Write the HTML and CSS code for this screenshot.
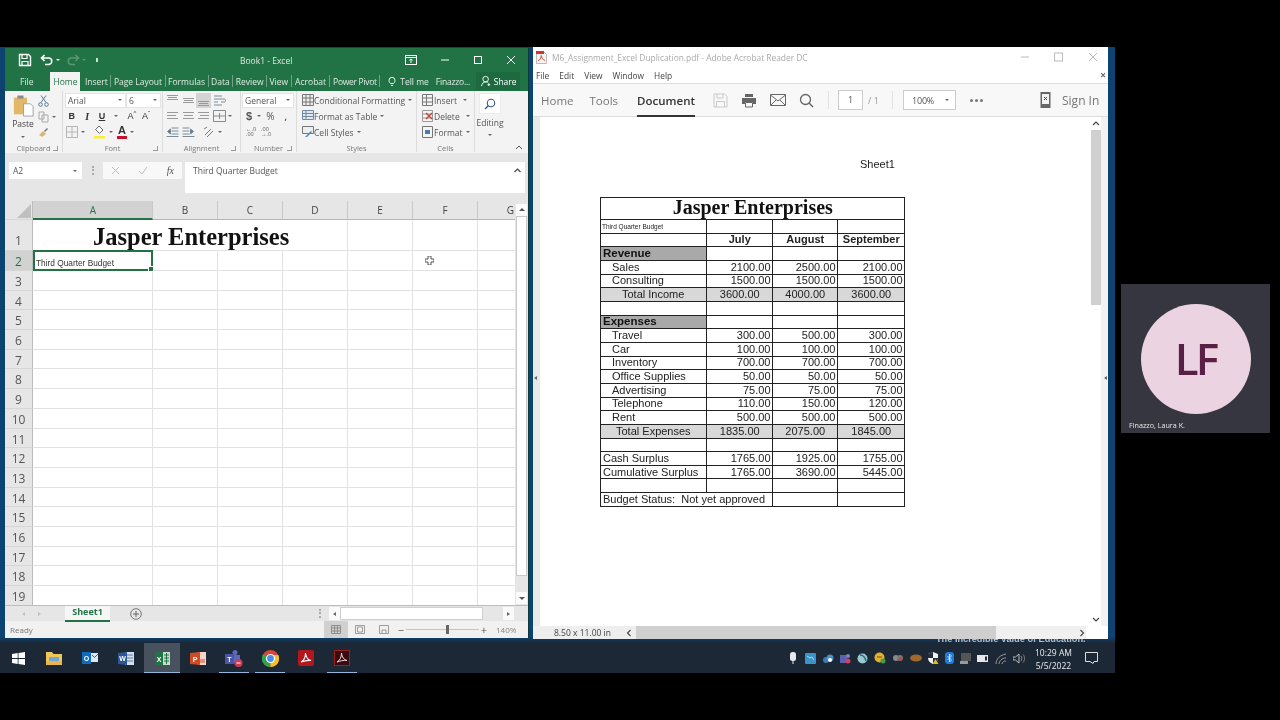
FILE: index.html
```html
<!DOCTYPE html>
<html lang="en">
<head>
<meta charset="utf-8">
<title>Excel and Acrobat</title>
<link rel="stylesheet" href="styles.css">
</head>
<body>
<div class="stage">
  <div class="screen">
    <div class="wallpaper-text">The Incredible Value of Education.</div>

    <section class="excel">
      <div class="x-title">
        <div class="qat">
          <svg width="14" height="14" viewBox="0 0 14 14"><path d="M1.5 1.5h9l2 2v9h-11z" fill="none" stroke="#fff" stroke-width="1.4"/><path d="M4 2v3.5h5V2M4 12.5V8.500h6v4" fill="none" stroke="#fff" stroke-width="1.2"/></svg>
          <svg class="undo" width="14" height="12" viewBox="0 0 14 12"><path d="M2 4h6.500a3.200 3.200 0 0 1 0 6.500H5M4.500 1L1.500 4l3 3" fill="none" stroke="#fff" stroke-width="1.600"/></svg>
          <span class="tiny-caret w"></span>
          <svg class="dim redo" width="14" height="12" viewBox="0 0 14 12"><path d="M12 4H5.500a3.200 3.200 0 0 0 0 6.500H9M9.500 1l3 3-3 3" fill="none" stroke="#fff" stroke-width="1.600"/></svg>
          <span class="tiny-caret dim w"></span>
          <span class="qat-more"></span>
        </div>
        <div class="x-name">Book1 - Excel</div>
        <div class="win-btns">
          <svg width="12" height="10" viewBox="0 0 12 10"><rect x=".5" y=".5" width="11" height="9" fill="none" stroke="#fff"/><path d="M.5 2.500h11M6 8V4M4.300 5.500 6 3.800l1.700 1.700" fill="none" stroke="#fff"/></svg>
          <svg width="10" height="10" viewBox="0 0 10 10"><path d="M1 5h8" stroke="#fff"/></svg>
          <svg width="10" height="10" viewBox="0 0 10 10"><rect x="1.500" y="1.500" width="7" height="7" fill="none" stroke="#fff"/></svg>
          <svg width="10" height="10" viewBox="0 0 10 10"><path d="M1 1l8 8M9 1L1 9" stroke="#fff"/></svg>
        </div>
      </div>
      <nav class="x-tabs">
        <span class="tab file">File</span>
        <span class="tab home">Home</span>
        <span class="tab">Insert</span><i></i>
        <span class="tab">Page Layout</span><i></i>
        <span class="tab">Formulas</span><i></i>
        <span class="tab">Data</span><i></i>
        <span class="tab">Review</span><i></i>
        <span class="tab">View</span><i></i>
        <span class="tab t-next">Acrobat</span><i></i>
        <span class="tab t-next t-pp">Power Pivot</span><i></i>
        <span class="tab tell"><svg width="8" height="11" viewBox="0 0 8 11"><path d="M2.500 7.500C1.500 6.500 1 5.700 1 4.300a3 3 0 0 1 6 0c0 1.400-.5 2.200-1.500 3.200zM3 9.500h2" fill="none" stroke="#fff" stroke-width=".9"/></svg>Tell me</span>
        <span class="tab user">Finazzo...</span>
        <span class="share"><svg width="11" height="12" viewBox="0 0 11 12"><circle cx="5" cy="4" r="3" fill="none" stroke="#fff"/><path d="M.5 11.500C1 8.500 3 7 5 7s2.500.5 3 1M8.500 8.500v3M7 10h3" fill="none" stroke="#fff"/></svg>Share</span>
      </nav>

      <div class="ribbon">
        <div class="grp g-clip">
          <div class="grp-body clip-body">
            <div class="paste">
              <svg width="21" height="24" viewBox="0 0 24 27"><path d="M1 4h15v19H1z" fill="#e3b768"/><path d="M5 1.500h7V5H5z" fill="#8a8a8a"/><path d="M12 11h8l3 3v11H12z" fill="#fff" stroke="#9a9a9a"/></svg>
              <span>Paste</span><span class="tiny-caret"></span>
            </div>
            <div class="clip-col">
              <svg width="11" height="12" viewBox="0 0 11 12"><path d="M3 .500l5 7M8 .500l-5 7" stroke="#5a7a9a"/><circle cx="2.500" cy="9.500" r="1.800" fill="none" stroke="#5a7a9a"/><circle cx="8.500" cy="9.500" r="1.800" fill="none" stroke="#5a7a9a"/></svg>
              <span class="with-caret"><svg width="11" height="12" viewBox="0 0 11 12"><path d="M1 1h5v7H1zM4 4h6v7H4z" fill="#f4f4f4" stroke="#a9a9a9"/></svg><span class="tiny-caret"></span></span>
              <svg width="11" height="11" viewBox="0 0 11 11"><path d="M1 8l4-4 3 3-4 3z" fill="#d8b878"/><path d="M6 4l3-3 1 1-3 3z" fill="#777"/></svg>
            </div>
          </div>
          <div class="grp-label">Clipboard<b class="launcher"></b></div>
        </div>

        <div class="grp g-font">
          <div class="grp-body rows">
            <div class="rw selects"><span class="sel name">Arial<span class="tiny-caret"></span></span><span class="sel size">6<span class="tiny-caret"></span></span></div>
            <div class="rw font-btns"><b class="fb">B</b><em class="fb">I</em><u class="fb">U</u><span class="tiny-caret"></span><span class="fb ga">A<sup>^</sup></span><span class="fb ga">A<sup>ˇ</sup></span></div>
            <div class="rw fill-btns">
              <svg width="12" height="12" viewBox="0 0 12 12"><path d="M.5.500h11v11H.5zM6 .500v11M.5 6h11" fill="none" stroke="#b5b5b5"/></svg><span class="tiny-caret"></span>
              <svg class="ml" width="13" height="14" viewBox="0 0 13 14"><path d="M6 1l4 4-3.500 3.500-4-4z" fill="#fff" stroke="#666"/><path d="M1 11h11v2.500H1z" fill="#f6ee3a"/></svg><span class="tiny-caret"></span>
              <span class="colour-a">A</span><span class="tiny-caret"></span>
            </div>
          </div>
          <div class="grp-label">Font<b class="launcher"></b></div>
        </div>

        <div class="grp g-align">
          <div class="grp-body rows">
            <div class="rw al"><span class="lines top"></span><span class="lines mid"></span><span class="lines bot on"></span><svg width="13" height="12" viewBox="0 0 13 12"><path d="M1 2h8M1 5h10c2 0 2 3 0 3H8M1 8h4M1 11h8" fill="none" stroke="#7a8a9a"/></svg></div>
            <div class="rw al"><span class="lines ll"></span><span class="lines lc"></span><span class="lines lr"></span><svg width="13" height="12" viewBox="0 0 13 12"><path d="M.5.500h12v11H.5zM.5 6h12M6.500 3v6" fill="none" stroke="#8a8a8a"/></svg><span class="tiny-caret"></span></div>
            <div class="rw al"><svg width="13" height="10" viewBox="0 0 12 10"><path d="M5 1h7M5 4h7M5 7h7M0 9.500h12M4 2L1 4.500 4 7z" stroke="#7a8a9a" fill="#3d78b8"/></svg><svg width="13" height="10" viewBox="0 0 12 10"><path d="M0 1h7M0 4h7M0 7h7M0 9.500h12M8 2l3 2.500L8 7z" stroke="#7a8a9a" fill="#3d78b8"/></svg><svg class="ml" width="12" height="12" viewBox="0 0 12 12"><path d="M2 9l6-6M4 11l6-6M1 3l3-2" stroke="#777" fill="none"/></svg><span class="tiny-caret"></span></div>
          </div>
          <div class="grp-label">Alignment<b class="launcher"></b></div>
        </div>

        <div class="grp g-num">
          <div class="grp-body rows">
            <div class="rw"><span class="sel gen">General<span class="tiny-caret"></span></span></div>
            <div class="rw nums"><span class="dollar">$</span><span class="tiny-caret"></span><span class="pct">%</span><span class="comma">,</span></div>
            <div class="rw nums dec"><span>←.0<br>.00</span><span>.00<br>→.0</span></div>
          </div>
          <div class="grp-label">Number<b class="launcher"></b></div>
        </div>

        <div class="grp g-styles">
          <div class="grp-body rows tight">
            <div class="rw cmd"><svg width="12" height="12" viewBox="0 0 12 12"><path d="M.5.500h11v11H.5zM4 .500v11M8 .500v11M.5 4h11M.5 8h11" fill="#eee" stroke="#777"/></svg>Conditional Formatting<span class="tiny-caret"></span></div>
            <div class="rw cmd"><svg width="12" height="12" viewBox="0 0 12 12"><path d="M.5.500h11v9H.5zM.5 3.500h11M.5 6.500h11M4 .500v9" fill="#dfe8f0" stroke="#6f8aa0"/></svg>Format as Table<span class="tiny-caret"></span></div>
            <div class="rw cmd"><svg width="12" height="12" viewBox="0 0 12 12"><path d="M.5.500h11v7H.5z" fill="#eee" stroke="#777"/><path d="M3 11l6-6 1 1-5 5z" fill="#4a86c0"/></svg>Cell Styles<span class="tiny-caret"></span></div>
          </div>
          <div class="grp-label">Styles</div>
        </div>

        <div class="grp g-cells">
          <div class="grp-body rows tight">
            <div class="rw cmd"><svg class="sm" width="11" height="12" viewBox="0 0 11 12"><path d="M.5.500h10v11H.5zM.5 4h10M.5 8h10M4.500.500v11" fill="#f4f4f4" stroke="#777"/></svg>Insert<span class="tiny-caret gap"></span></div>
            <div class="rw cmd"><svg class="sm" width="11" height="12" viewBox="0 0 11 12"><path d="M.5.500h10v11H.5zM.5 4h10M.5 8h10" fill="#f4f4f4" stroke="#999"/><path d="M4 3l6 6M10 3L4 9" stroke="#c9402c" stroke-width="1.300"/></svg>Delete<span class="tiny-caret gap"></span></div>
            <div class="rw cmd"><svg class="sm" width="11" height="12" viewBox="0 0 11 12"><path d="M.5.500h10v11H.5z" fill="#f4f4f4" stroke="#777"/><path d="M3 4h5v4H3z" fill="#4a7ca8"/></svg>Format<span class="tiny-caret"></span></div>
          </div>
          <div class="grp-label">Cells</div>
        </div>

        <div class="grp g-edit">
          <div class="grp-body edit-body">
            <span class="find"><svg width="12" height="12" viewBox="0 0 12 12"><circle cx="7" cy="5" r="3.700" fill="none" stroke="#2f5a80" stroke-width="1.100"/><path d="M4.300 7.700L1 11" stroke="#2f5a80" stroke-width="1.300"/></svg></span>
            <span class="edit-label">Editing</span>
            <span class="tiny-caret"></span>
          </div>
        </div>
        <svg class="collapse" width="8" height="5" viewBox="0 0 8 5"><path d="M1 4l3-3 3 3" fill="none" stroke="#555"/></svg>
      </div>

      <div class="fbar">
        <div class="namebox">A2<span class="tiny-caret"></span></div>
        <span class="grip"></span>
        <div class="fx-btns">
          <svg width="9" height="9" viewBox="0 0 9 9"><path d="M1 1l7 7M8 1L1 8" stroke="#bbb"/></svg>
          <svg width="10" height="9" viewBox="0 0 10 9"><path d="M1 5l3 3 5-7" fill="none" stroke="#bbb"/></svg>
          <span class="fx">fx</span>
        </div>
        <div class="fx-input">Third Quarter Budget<svg width="7" height="5" viewBox="0 0 7 5"><path d="M.5 4L3.500 1l3 3" fill="none" stroke="#444" stroke-width="1.200"/></svg></div>
      </div>

      <div class="sheet-area">
        <div class="sheet">
          <div class="row head"><span class="rh corner"><s></s></span><span class="ch on">A</span><span class="ch">B</span><span class="ch">C</span><span class="ch">D</span><span class="ch">E</span><span class="ch">F</span><span class="ch g">G</span></div>
          <div class="row r1"><span class="rh">1</span><span class="c title">Jasper Enterprises</span><span class="c nb"></span><span class="c nb"></span><span class="c"></span><span class="c"></span><span class="c"></span><span class="c"></span></div>
          <div class="row r2"><span class="rh on">2</span><span class="c sel-cell">Third Quarter Budget</span><span class="c"></span><span class="c"></span><span class="c"></span><span class="c"></span><span class="c"></span><span class="c"></span></div>
          <div class="row"><span class="rh">3</span><span class="c"></span><span class="c"></span><span class="c"></span><span class="c"></span><span class="c"></span><span class="c"></span><span class="c"></span></div>
          <div class="row"><span class="rh">4</span><span class="c"></span><span class="c"></span><span class="c"></span><span class="c"></span><span class="c"></span><span class="c"></span><span class="c"></span></div>
          <div class="row"><span class="rh">5</span><span class="c"></span><span class="c"></span><span class="c"></span><span class="c"></span><span class="c"></span><span class="c"></span><span class="c"></span></div>
          <div class="row"><span class="rh">6</span><span class="c"></span><span class="c"></span><span class="c"></span><span class="c"></span><span class="c"></span><span class="c"></span><span class="c"></span></div>
          <div class="row"><span class="rh">7</span><span class="c"></span><span class="c"></span><span class="c"></span><span class="c"></span><span class="c"></span><span class="c"></span><span class="c"></span></div>
          <div class="row"><span class="rh">8</span><span class="c"></span><span class="c"></span><span class="c"></span><span class="c"></span><span class="c"></span><span class="c"></span><span class="c"></span></div>
          <div class="row"><span class="rh">9</span><span class="c"></span><span class="c"></span><span class="c"></span><span class="c"></span><span class="c"></span><span class="c"></span><span class="c"></span></div>
          <div class="row"><span class="rh">10</span><span class="c"></span><span class="c"></span><span class="c"></span><span class="c"></span><span class="c"></span><span class="c"></span><span class="c"></span></div>
          <div class="row"><span class="rh">11</span><span class="c"></span><span class="c"></span><span class="c"></span><span class="c"></span><span class="c"></span><span class="c"></span><span class="c"></span></div>
          <div class="row"><span class="rh">12</span><span class="c"></span><span class="c"></span><span class="c"></span><span class="c"></span><span class="c"></span><span class="c"></span><span class="c"></span></div>
          <div class="row"><span class="rh">13</span><span class="c"></span><span class="c"></span><span class="c"></span><span class="c"></span><span class="c"></span><span class="c"></span><span class="c"></span></div>
          <div class="row"><span class="rh">14</span><span class="c"></span><span class="c"></span><span class="c"></span><span class="c"></span><span class="c"></span><span class="c"></span><span class="c"></span></div>
          <div class="row"><span class="rh">15</span><span class="c"></span><span class="c"></span><span class="c"></span><span class="c"></span><span class="c"></span><span class="c"></span><span class="c"></span></div>
          <div class="row"><span class="rh">16</span><span class="c"></span><span class="c"></span><span class="c"></span><span class="c"></span><span class="c"></span><span class="c"></span><span class="c"></span></div>
          <div class="row"><span class="rh">17</span><span class="c"></span><span class="c"></span><span class="c"></span><span class="c"></span><span class="c"></span><span class="c"></span><span class="c"></span></div>
          <div class="row"><span class="rh">18</span><span class="c"></span><span class="c"></span><span class="c"></span><span class="c"></span><span class="c"></span><span class="c"></span><span class="c"></span></div>
          <div class="row"><span class="rh">19</span><span class="c"></span><span class="c"></span><span class="c"></span><span class="c"></span><span class="c"></span><span class="c"></span><span class="c"></span></div>
          <svg class="cell-cursor" width="9" height="9" viewBox="0 0 9 9"><path d="M3 0h3v3h3v3H6v3H3V6H0V3h3z" fill="#fff" stroke="#333" stroke-width=".8"/></svg>
        </div>
        <div class="vscroll"><span class="arrow-btn up"></span><span class="thumb"></span><span class="arrow-btn down"></span></div>
      </div>

      <div class="sheet-tabs">
        <span class="nav-tri left"></span><span class="nav-tri right"></span>
        <span class="sheet-tab">Sheet1</span>
        <svg class="add" width="12" height="12" viewBox="0 0 12 12"><circle cx="6" cy="6" r="5.300" fill="none" stroke="#777"/><path d="M6 3v6M3 6h6" stroke="#666"/></svg>
        <span class="dots"></span>
        <div class="hscroll"><span class="h-btn"><span class="nav-tri left dark"></span></span><span class="h-thumb"></span><span class="h-track"></span><span class="h-btn"><span class="nav-tri right dark"></span></span></div>
      </div>

      <div class="x-status">
        <span class="ready">Ready</span>
        <div class="views">
          <span class="view on"><svg width="10" height="9" viewBox="0 0 10 9"><path d="M.5.500h9v8h-9zM3.500.500v8M6.500.500v8M.5 3h9M.5 6h9" fill="none" stroke="#777" stroke-width=".7"/></svg></span>
          <span class="view"><svg width="10" height="9" viewBox="0 0 10 9"><path d="M.5.500h9v8h-9zM2.500 2h5v5h-5z" fill="none" stroke="#888" stroke-width=".8"/></svg></span>
          <span class="view"><svg width="10" height="9" viewBox="0 0 10 9"><path d="M.5.500h9v8h-9zM3 8V5h4v3" fill="none" stroke="#888" stroke-width=".8"/></svg></span>
        </div>
        <div class="zoom"><span class="zm">−</span><span class="slider"><b></b></span><span class="zm">+</span><span class="pc">140%</span></div>
      </div>
    </section>

    <section class="acro">
      <div class="a-title">
        <svg width="11" height="13" viewBox="0 0 11 13"><path d="M.5.500h7l3 3v9h-10z" fill="#f4f4f4" stroke="#bbb"/><path d="M0 0h8v3H0z" fill="#c8392b"/><path d="M2 10c2-1 3-3 3.300-5.500C5.800 7 7 9 9 9.500" fill="none" stroke="#d0483a"/></svg>
        <span class="a-name">M6_Assignment_Excel Duplication.pdf - Adobe Acrobat Reader DC</span>
        <div class="a-win">
          <svg width="10" height="10" viewBox="0 0 10 10"><path d="M1 5h8" stroke="#bbb"/></svg>
          <svg width="10" height="10" viewBox="0 0 10 10"><rect x=".5" y="1" width="8" height="8" fill="none" stroke="#bbb"/></svg>
          <svg width="10" height="10" viewBox="0 0 10 10"><path d="M1 1l8 8M9 1L1 9" stroke="#bbb"/></svg>
        </div>
      </div>
      <div class="a-menu"><span>File</span><span>Edit</span><span>View</span><span>Window</span><span>Help</span><b>×</b></div>
      <div class="a-tools">
        <span class="at">Home</span><span class="at at-tools">Tools</span><span class="at doc">Document</span>
        <div class="a-icons">
          <svg width="15" height="15" viewBox="0 0 15 15"><path d="M1 1h10.500L14 3.500V14H1zM4 1v4h6V1M3.500 14V8.500h8V14" fill="none" stroke="#c9c9c9"/></svg>
          <svg width="16" height="15" viewBox="0 0 16 15"><path d="M4 1h8v3H4z" fill="#666"/><path d="M1 5h14v6h-3V9H4v2H1z" fill="#666"/><path d="M4.500 9.500h7V14h-7z" fill="none" stroke="#666"/></svg>
          <svg width="16" height="12" viewBox="0 0 16 12"><path d="M.5.500h15v11H.5zM.5 1L8 7l7.500-6M1 11l5-5M15 11l-5-5" fill="none" stroke="#666"/></svg>
          <svg width="15" height="15" viewBox="0 0 15 15"><circle cx="6.500" cy="6.500" r="5" fill="none" stroke="#666" stroke-width="1.300"/><path d="M10 10l4 4" stroke="#666" stroke-width="1.500"/></svg>
        </div>
        <span class="tsep"></span>
        <span class="pg-box">1</span><span class="pg-of">/ 1</span>
        <span class="tsep"></span>
        <span class="zoom-box">100%<span class="tiny-caret"></span></span>
        <span class="more"><i></i><i></i><i></i></span>
        <svg class="mobile" width="11" height="16" viewBox="0 0 10 16"><path d="M0 0h10v16H0z" fill="#666"/><path d="M1.500 2h7v10h-7z" fill="#f4f4f4"/><path d="M3.500 5l3 3M6.500 5l-3 3" stroke="#444"/></svg>
        <span class="signin">Sign In</span>
      </div>
      <div class="a-body">
        <span class="side left"><span class="nav-tri left dark"></span></span>
        <div class="page">
          <div class="page-head">Sheet1</div>
          <table class="budget">
            <colgroup><col class="c1"><col class="c2"><col class="c3"><col class="c4"></colgroup>
            <tr class="t-head"><td colspan="4">Jasper Enterprises</td></tr>
            <tr><td class="tiny">Third Quarter Budget</td><td></td><td></td><td></td></tr>
            <tr class="mon"><td></td><td>July</td><td>August</td><td>September</td></tr>
            <tr><td class="sec">Revenue</td><td></td><td></td><td></td></tr>
            <tr><td class="in">Sales</td><td>2100.00</td><td>2500.00</td><td>2100.00</td></tr>
            <tr><td class="in">Consulting</td><td>1500.00</td><td>1500.00</td><td>1500.00</td></tr>
            <tr class="tot"><td class="in2">Total Income</td><td>3600.00</td><td>4000.00</td><td>3600.00</td></tr>
            <tr><td></td><td></td><td></td><td></td></tr>
            <tr><td class="sec">Expenses</td><td></td><td></td><td></td></tr>
            <tr><td class="in">Travel</td><td>300.00</td><td>500.00</td><td>300.00</td></tr>
            <tr><td class="in">Car</td><td>100.00</td><td>100.00</td><td>100.00</td></tr>
            <tr><td class="in">Inventory</td><td>700.00</td><td>700.00</td><td>700.00</td></tr>
            <tr><td class="in">Office Supplies</td><td>50.00</td><td>50.00</td><td>50.00</td></tr>
            <tr><td class="in">Advertising</td><td>75.00</td><td>75.00</td><td>75.00</td></tr>
            <tr><td class="in">Telephone</td><td>110.00</td><td>150.00</td><td>120.00</td></tr>
            <tr><td class="in">Rent</td><td>500.00</td><td>500.00</td><td>500.00</td></tr>
            <tr class="tot"><td class="in3">Total Expenses</td><td>1835.00</td><td>2075.00</td><td>1845.00</td></tr>
            <tr><td></td><td></td><td></td><td></td></tr>
            <tr><td>Cash Surplus</td><td>1765.00</td><td>1925.00</td><td>1755.00</td></tr>
            <tr><td>Cumulative Surplus</td><td>1765.00</td><td>3690.00</td><td>5445.00</td></tr>
            <tr><td></td><td></td><td></td><td></td></tr>
            <tr><td colspan="2">Budget Status:&nbsp; Not yet approved</td><td></td><td></td></tr>
          </table>
        </div>
        <div class="a-vscroll"><svg width="8" height="5" viewBox="0 0 8 5"><path d="M1 4l3-3 3 3" fill="none" stroke="#444" stroke-width="1.200"/></svg><span class="a-thumb"></span><svg width="8" height="5" viewBox="0 0 8 5"><path d="M1 1l3 3 3-3" fill="none" stroke="#444" stroke-width="1.200"/></svg></div>
        <span class="side right"><span class="nav-tri left dark"></span></span>
      </div>
      <div class="a-status">
        <span class="dim-text">8.50 x 11.00 in</span>
        <svg width="6" height="8" viewBox="0 0 6 8"><path d="M4.500 1l-3 3 3 3" fill="none" stroke="#444" stroke-width="1.100"/></svg>
        <span class="a-hthumb"></span>
        <span class="a-htrack"><svg width="6" height="8" viewBox="0 0 6 8"><path d="M1.500 1l3 3-3 3" fill="none" stroke="#444" stroke-width="1.100"/></svg></span>
        <span class="a-end"></span>
      </div>
    </section>

    <footer class="taskbar">
      <div class="apps">
        <span class="app"><svg width="13" height="13" viewBox="0 0 13 13"><path d="M0 2l5.700-.9v5H0zM6.500 1L13 0v6.100H6.500zM0 6.900h5.700v5L0 11zM6.500 6.900H13V13l-6.500-1z" fill="#fff"/></svg></span>
        <span class="app"><svg width="16" height="14" viewBox="0 0 16 14"><path d="M0 1h6l1.500 2H16v11H0z" fill="#f0c65a"/><path d="M3 6h10v4H3z" fill="#6fa8d8"/><path d="M0 10h16v4H0z" fill="#e8b848"/></svg></span>
        <span class="app"><svg width="16" height="14" viewBox="0 0 16 14"><path d="M0 1h9v12H0z" fill="#0f6cbd"/><path d="M9 2h7v9H9z" fill="#d8e8f4"/><path d="M10 4l2.500 2.500L16 3" fill="none" stroke="#0f6cbd"/><text x="4.500" y="10" class="app-letter">O</text></svg></span>
        <span class="app"><svg width="16" height="15" viewBox="0 0 16 15"><path d="M7 1h9v13H7z" fill="#d5dfea"/><path d="M9 4h6M9 7h6M9 10h6" stroke="#5a7ca8"/><path d="M0 2l9-1v13l-9-1z" fill="#2b5797"/><text x="4.500" y="10" class="app-letter">W</text></svg></span>
        <span class="app active"><svg width="16" height="15" viewBox="0 0 16 15"><path d="M8 1h8v13H8z" fill="#c9dccc"/><path d="M10 4h5M10 7h5M10 10h5M12.500 2v11" stroke="#217346"/><path d="M1 1h8v13H1z" fill="#217346"/><text x="5" y="10.500" class="app-letter">X</text></svg></span>
        <span class="app"><svg width="16" height="15" viewBox="0 0 16 15"><path d="M8 1h8v13H8z" fill="#f4d5c8"/><path d="M10 9h5M10 11h5" stroke="#c9522a"/><path d="M0 2l10-1v13L0 13z" fill="#d04a23"/><text x="5" y="10.500" class="app-letter">P</text></svg></span>
        <span class="app under"><svg width="18" height="17" viewBox="0 0 18 17"><circle cx="10" cy="2.500" r="2.500" fill="#5f68b8"/><path d="M6 5h9v8H6z" fill="#5f68b8"/><path d="M0 4h9v10H0z" fill="#4a55a8"/><text x="4.500" y="12" class="app-letter">T</text><circle cx="13.500" cy="13" r="4" fill="#d13b58"/><path d="M11.500 13h4" stroke="#fff"/></svg></span>
        <span class="app under"><svg width="17" height="17" viewBox="0 0 17 17"><circle cx="8.500" cy="8.500" r="8.500" fill="#db4437"/><path d="M8.500 8.500L1.200 13A8.500 8.500 0 0 0 8.500 17z" fill="#2da44e"/><path d="M8.500 5H16.300A8.500 8.500 0 0 1 8.500 17z" fill="#f6c026"/><path d="M1.200 4 8.500 8.500 1.200 13A8.500 8.500 0 0 1 1.200 4z" fill="#2da44e"/><circle cx="8.500" cy="8.500" r="4" fill="#4a8ce8" stroke="#fff" stroke-width="1.200"/></svg></span>
        <span class="app"><svg width="16" height="16" viewBox="0 0 16 16"><rect width="16" height="16" rx="2" fill="#b3161c"/><path d="M3 12c3-1.500 4.500-5 4.500-9C8 7 10 10 13 10.500 9.500 10 6 11 3 12z" fill="none" stroke="#fff" stroke-width="1.100"/></svg></span>
        <span class="app under"><svg width="16" height="16" viewBox="0 0 16 16"><rect x=".5" y=".5" width="15" height="15" fill="#3a0c10" stroke="#9a2020"/><path d="M3 12c3-1.500 4.500-5 4.500-9C8 7 10 10 13 10.500 9.500 10 6 11 3 12z" fill="none" stroke="#f0d8d8" stroke-width="1"/></svg></span>
      </div>
      <div class="tray">
        <svg class="mic" width="8" height="12" viewBox="0 0 8 12"><rect x="1" width="6" height="9" rx="2.500" fill="#e8e8e8"/><path d="M4 9v3" stroke="#e8e8e8"/></svg>
        <svg width="11" height="11" viewBox="0 0 11 11"><rect width="11" height="11" rx="1" fill="#3a94c8"/><path d="M2 3l3 2 2-1 2 3" stroke="#a8dcf0" fill="none"/></svg>
        <svg width="12" height="9" viewBox="0 0 12 9"><circle cx="4" cy="6" r="3" fill="#3a7ab8"/><circle cx="8" cy="4" r="3.500" fill="#4a8ec8"/><circle cx="8" cy="6" r="2" fill="#fff"/></svg>
        <svg width="11" height="11" viewBox="0 0 11 11"><rect y="2" width="7" height="8" fill="#5a62b0"/><circle cx="8" cy="3" r="2" fill="#7a82c8"/><circle cx="8" cy="8" r="2.500" fill="#d14060"/></svg>
        <svg width="11" height="11" viewBox="0 0 11 11"><circle cx="5.500" cy="5.500" r="5" fill="#9ac8d0"/><path d="M3 2c3 0 5 2 6 6" stroke="#2a6a80" stroke-width="1.500" fill="none"/></svg>
        <svg width="12" height="12" viewBox="0 0 12 12"><circle cx="5.500" cy="5.500" r="5" fill="#e0b030"/><path d="M3 5h5" stroke="#805010"/><circle cx="9" cy="9" r="2.500" fill="#40a040"/></svg>
        <svg width="12" height="10" viewBox="0 0 12 10"><circle cx="4" cy="5" r="3" fill="#8a8a8a"/><circle cx="8" cy="5" r="3" fill="#777"/><circle cx="8.500" cy="6" r="1.800" fill="#d04030"/></svg>
        <svg width="12" height="8" viewBox="0 0 12 8"><ellipse cx="6" cy="4" rx="6" ry="3.500" fill="#a0682c"/></svg>
        <svg width="11" height="12" viewBox="0 0 11 12"><path d="M5 0l5 2v4c0 3-2 5-5 6-3-1-5-3-5-6V2z" fill="#f2f2f2"/><path d="M5 0v6H0V2zM5 6h5c0 3-2 5-5 6z" fill="#202c3a"/><path d="M7.500 7l3 5h-6z" fill="#e8b820"/></svg>
        <svg width="9" height="12" viewBox="0 0 9 12"><rect width="9" height="12" rx="3" fill="#1f7ae0"/><path d="M2.500 4l4 4L4.500 10V2l2 2-4 4" fill="none" stroke="#fff" stroke-width=".7"/></svg>
        <svg width="11" height="11" viewBox="0 0 11 11"><path d="M1 0h10v8H1z" fill="#555"/><path d="M0 8h8v3H0z" fill="#999"/></svg>
        <svg width="12" height="7" viewBox="0 0 12 7"><path d="M0 0h11v7H0z" fill="#e8e8e8"/><path d="M8 1.500h2v4H8z" fill="#202c3a"/></svg>
        <svg width="12" height="11" viewBox="0 0 12 11"><path d="M1 11C1 6 5 2 11 1M4 11c0-3 3-6 7-6M7 11c0-2 2-3 4-3" fill="none" stroke="#999"/></svg>
        <svg width="13" height="11" viewBox="0 0 13 11"><path d="M0 4h2.500L6 1v9L2.500 7H0z" fill="none" stroke="#bbb"/><path d="M8 3c1 1 1 4 0 5M10 1.500c2 2 2 6 0 8" fill="none" stroke="#888"/></svg>
        <div class="clock"><span>10:29 AM</span><span>5/5/2022</span></div>
        <svg class="notify" width="13" height="12" viewBox="0 0 13 12"><path d="M.5.500h12v9H9l-1 2-3-2H.5z" fill="none" stroke="#ddd"/></svg>
      </div>
    </footer>
  </div>

  <aside class="tile">
    <div class="avatar">LF</div>
    <span class="tile-name">Finazzo, Laura K.</span>
  </aside>
</div>
</body>
</html>
```

FILE: styles.css
```css
* { box-sizing: border-box; }
html, body { margin: 0; padding: 0; background: #000; }
.stage { position: relative; width: 1280px; height: 720px; overflow: hidden; background: #000; font-family: "Open Sans", "Noto Sans", sans-serif; filter: blur(.35px); }
.screen { position: absolute; left: 0; top: 47px; width: 1115px; height: 626px; background: linear-gradient(#0d4371 0, #0c4372 590px, #1c2836 596px); overflow: hidden; }
.wallpaper-text { position: absolute; left: 936px; top: 587px; font: 700 9.200px "Liberation Sans", sans-serif; color: #b4c0ca; }

.tiny-caret { display: inline-block; width: 0; height: 0; border: 2px solid transparent; border-top: 2.500px solid #666; border-bottom: 0; flex: none; }
.tiny-caret.w { border-top-color: #fff; }
.dim { opacity: .25; }

/* Excel window */
.excel { position: absolute; left: 5px; top: 1px; width: 524px; height: 590px; background: #e6e6e6; display: flex; flex-direction: column; border-right: 1px solid #0d3a40; }
.x-title { height: 22px; padding-top: 2px; background: #217346; display: flex; align-items: center; color: #e8f0ea; flex: none; position: relative; }
.qat { display: flex; align-items: center; gap: 2px; padding-left: 13px; width: 100px; }
.qat .undo { margin-left: 6px; }
.qat .redo { margin-left: 4px; }
.qat-more { width: 2px; height: 4px; background: #cfe0d4; margin-left: 8px; }
.x-name { position: absolute; left: 235px; top: 7px; font-size: 8.500px; color: #dfe9e2; }
.win-btns { margin-left: auto; display: flex; gap: 23px; align-items: center; padding-right: 12px; }
.x-tabs { height: 21px; background: #217346; display: flex; align-items: flex-end; flex: none; color: #dfeae3; font-size: 8.500px; }
.x-tabs i { width: 1px; height: 12px; background: #6ea488; margin-bottom: 4px; }
.tab { padding: 0 2.500px 3px; line-height: 12px; white-space: nowrap; }
.tab.file { padding: 0 17px 3px 15px; }
.tab.home { background: #f3f3f3; color: #217346; padding: 4px 3px 3px; margin-right: 2px; width: 30px; }
.tab.t-next { padding-left: 3.500px; }
.tab.t-pp { letter-spacing: -.3px; }
.tab.tell { display: flex; gap: 4px; padding-left: 8px; }
.tab.user { margin-left: 2px; letter-spacing: -.2px; }
.share { background: #1d6a40; display: flex; align-items: center; gap: 3px; padding: 0 3px 0 5px; height: 18px; width: 44px; margin-bottom: 1px; margin-left: 3px; color: #fff; font-size: 8.500px; flex: none; }

.ribbon { height: 64px; background: #f3f3f3; display: flex; flex: none; position: relative; border-bottom: 2px solid #e6e6e6; color: #444; font-size: 8.500px; }
.grp { display: flex; flex-direction: column; border-right: 1px solid #dcdcdc; margin-bottom: 1px; flex: none; }
.grp-body { flex: none; height: 51px; padding-top: 1px; }
.grp-label { height: 11px; line-height: 13px; font-size: 7.500px; color: #777; text-align: center; position: relative; }
.launcher { position: absolute; right: 4px; top: 4px; width: 5px; height: 5px; border-right: 1px solid #999; border-bottom: 1px solid #999; }
.g-clip { width: 58px; }
.g-font { width: 100px; }
.g-align { width: 78px; }
.g-num { width: 56px; }
.g-styles { width: 120px; }
.g-cells { width: 58px; }
.g-edit { width: 30px; border-right: 0; }
.clip-body { display: flex; padding-left: 6px; }
.paste { width: 24px; display: flex; flex-direction: column; align-items: center; font-size: 8.500px; padding-top: 2px; line-height: 11px; }
.paste .tiny-caret { margin-top: 7px; }
.clip-col { display: flex; flex-direction: column; align-items: flex-start; gap: 4px; padding: 3px 0 0 3px; }
.with-caret { display: flex; align-items: center; gap: 3px; }
.rows { display: flex; flex-direction: column; padding-left: 2px; }
.rw { height: 16px; display: flex; align-items: center; flex: none; }
.rows.tight .rw { padding-left: 3px; }
.sel { background: #fff; height: 15px; display: flex; align-items: center; justify-content: space-between; padding: 0 3px 0 2px; border: 1px solid #e4e4e4; font-size: 8.500px; color: #555; }
.sel.name { width: 61px; }
.sel.size { width: 35px; }
.sel.gen { width: 52px; margin-left: -1px; }
.fb { width: 15.500px; text-align: center; font: 700 9px "Liberation Sans", sans-serif; color: #333; }
em.fb { font-style: italic; font-family: "Liberation Serif", serif; font-size: 10px; }
u.fb { width: 14px; }
.font-btns { margin-left: -1px; }
.font-btns .tiny-caret { margin: 0 7px 0 5px; }
.ga { font-weight: 400; width: 14px; }
.ga sup { font-size: 6px; line-height: 0; }
.fill-btns { padding-left: 1px; gap: 3px; }
.fill-btns .ml { margin-left: 5px; }
.ml { margin-left: 6px; }
.colour-a { margin-left: 1px; font: 700 11px/11px "Liberation Sans", sans-serif; color: #333; border-bottom: 3px solid #c8102e; width: 10px; text-align: center; height: 14px; }
.al { gap: 2.500px; padding-left: 1px; }
.lines { width: 13px; height: 13px; flex: none; background-repeat: no-repeat; background-image: linear-gradient(#999,#999), linear-gradient(#999,#999), linear-gradient(#999,#999); background-size: 11px 1px, 9px 1px, 11px 1px; }
.lines.top { background-position: 1px 1px, 2px 3px, 1px 5px; }
.lines.mid { background-position: 1px 4px, 2px 6px, 1px 8px; }
.lines.bot { background-position: 2px 8px, 3px 10px, 2px 12px; }
.lines.bot.on { background-color: #d4d4d4; height: 15px; width: 15px; margin: 0 -1px; }
.lines.ll { background-position: 1px 2px, 1px 5px, 1px 8px; }
.lines.lc { background-position: 1px 2px, 2px 5px, 1px 8px; }
.lines.lr { background-position: 1px 2px, 3px 5px, 1px 8px; }
.nums { padding-left: 3px; color: #555; }
.dollar { font: 700 11px "Liberation Sans", sans-serif; color: #555; margin-right: 5px; }
.pct { font-size: 10px; margin-left: 5px; }
.comma { font-weight: 700; margin-left: 10px; }
.dec { gap: 5px; font-size: 5.500px; line-height: 5.500px; }
.cmd { white-space: nowrap; color: #555; font-size: 8.500px; }
.cmd .sm { margin-right: 1px; }
.cmd .tiny-caret { margin-left: 3px; }
.cmd .tiny-caret.gap { margin-left: 6px; }
.edit-body { display: flex; flex-direction: column; align-items: center; padding-top: 2px; }
.find { width: 22px; height: 21px; background: #fff; border: 1px solid #ececec; display: flex; align-items: center; justify-content: center; margin-bottom: 2px; }
.edit-label { font-size: 8.500px; line-height: 13px; color: #555; }
.edit-body .tiny-caret { margin-top: 5px; }
.collapse { position: absolute; right: 5px; bottom: 3px; }

.fbar { height: 46px; flex: none; padding: 7px 3px 0 4px; display: flex; align-items: flex-start; background: #e6e6e6; }
.namebox { width: 73px; height: 17px; background: #fff; display: flex; align-items: center; justify-content: space-between; padding: 0 5px 0 4px; font-size: 8.500px; color: #555; }
.grip { width: 2px; height: 9px; margin: 4px 9px 0 10px; border-left: 2px dotted #aaa; }
.fx-btns { width: 79px; height: 17px; background: #f8f8f8; display: flex; align-items: center; justify-content: space-between; padding: 0 8px; }
.fx { font: italic 10px "Liberation Serif", serif; color: #555; }
.fx-input { margin-left: 3px; flex: 1; height: 31px; background: #fff; padding: 2px 4px 0 8px; font-size: 8.500px; color: #555; display: flex; justify-content: space-between; line-height: 13px; }
.fx-input svg { margin-top: 4px; }

.sheet-area { height: 404px; flex: none; display: flex; }
.sheet { position: relative; width: 510px; background: #fff; flex: none; }
.row { display: flex; height: 19.700px; }
.row.head { height: 19px; }
.row.r1 { height: 31px; }
.row.r2 { height: 20px; }
.rh { width: 28px; flex: none; background: #e6e6e6; border-right: 1px solid #bdbdbd; border-bottom: 1px solid #d6d6d6; text-align: center; font-size: 12px; line-height: 22px; color: #555; }
.r1 .rh { line-height: 42px; }
.rh.on { background: #d2d2d2; color: #217346; }
.rh.corner { position: relative; }
.rh.corner s { position: absolute; right: 1px; bottom: 1px; width: 0; height: 0; border-style: solid; border-width: 0 0 14px 14px; border-color: transparent transparent #bfbfbf transparent; }
.ch { width: 65px; flex: none; background: #e6e6e6; border-right: 1px solid #c9c9c9; border-bottom: 1px solid #b5b5b5; text-align: center; font-size: 10px; line-height: 18px; color: #444; }
.ch.on { width: 120px; padding-left: 1px; background: #d2d2d2; color: #217346; border-bottom: 2px solid #217346; }
.ch.g { width: 37px; border-right: 0; text-align: right; padding-right: 1px; }
.c { width: 65px; flex: none; border-right: 1px solid #e2e2e2; border-bottom: 1px solid #e2e2e2; }
.c:nth-child(2) { width: 120px; }
.c:last-child { width: 37px; border-right: 0; }
.c.nb { border-right: 0; }
.c.title { border-right: 0; position: relative; white-space: nowrap; font: 700 24.500px/34px "Liberation Serif", serif; color: #111; padding-left: 60px; overflow: visible; }
.c.sel-cell { border: 2px solid #217346; margin: -1px 0 -1px; height: 21px; font: 8.300px/22px "Liberation Sans", sans-serif; color: #333; padding-left: 1px; position: relative; white-space: nowrap; }
.c.sel-cell::after { content: ""; position: absolute; right: -3px; bottom: -3px; width: 4px; height: 4px; background: #217346; border: 1px solid #fff; }
.cell-cursor { position: absolute; left: 419.500px; top: 54.500px; }
.vscroll { flex: 1; background: #e6e6e6; display: flex; flex-direction: column; padding: 3px 1px 0; align-items: stretch; position: relative; }
.arrow-btn { height: 12px; background: #fbfbfb; position: relative; flex: none; }
.arrow-btn::after { content: ""; position: absolute; left: 3px; border: 3px solid transparent; }
.arrow-btn.up::after { top: 1px; border-bottom: 3px solid #555; }
.arrow-btn.down::after { top: 5px; border-top: 3px solid #555; }
.thumb { height: 360px; background: #fff; border: 1px solid #c9c9c9; flex: none; }
.arrow-btn.down { margin-top: auto; margin-bottom: 1px; }

.sheet-tabs { height: 16px; flex: none; display: flex; align-items: center; background: #e6e6e6; border-top: 1px solid #bdbdbd; position: relative; padding-left: 17px; }
.nav-tri { display: inline-block; width: 0; height: 0; border: 2.500px solid transparent; flex: none; }
.nav-tri.left { border-right: 3px solid #c0c0c0; border-left: 0; }
.nav-tri.right { border-left: 3px solid #c0c0c0; border-right: 0; margin-left: 13px; }
.nav-tri.dark { border-right-color: #666; border-left-color: #666; margin: 0; }
.sheet-tab { margin-left: 24px; width: 45px; height: 16px; background: #f6f6f6; border-bottom: 2px solid #217346; font-size: 9px; font-weight: 700; color: #217346; text-align: center; line-height: 12px; }
.add { margin-left: 20px; }
.dots { width: 2px; height: 9px; border-left: 2px dotted #aaa; margin-left: 177px; }
.hscroll { display: flex; align-items: center; margin-left: 8px; height: 13px; }
.h-btn { width: 11px; height: 13px; background: #fafafa; display: flex; align-items: center; justify-content: center; }
.h-thumb { width: 143px; height: 13px; background: #fff; border: 1px solid #cfcfcf; }
.h-track { width: 20px; }
.x-status { height: 17px; flex: none; background: #f1f1f1; display: flex; align-items: center; font-size: 8px; color: #777; padding-left: 5px; }
.ready { width: 315px; }
.views { display: flex; height: 100%; margin-left: -1px; }
.view { width: 24px; display: flex; align-items: center; justify-content: center; }
.view.on { background: #d0d0d0; }
.zoom { display: flex; align-items: center; margin-left: 1px; }
.zm { font-size: 11px; color: #555; width: 8px; text-align: center; }
.slider { width: 73px; height: 1px; background: #c4c4c4; margin: 0 1px; position: relative; }
.slider b { position: absolute; left: 40px; top: -4px; width: 3px; height: 9px; background: #666; }
.pc { margin-left: 8px; color: #888; font-size: 8px; }

/* Acrobat window */
.acro { position: absolute; left: 533px; top: 0; width: 575px; height: 592px; background: #fff; display: flex; flex-direction: column; }
.a-title { height: 20px; flex: none; display: flex; align-items: center; padding-left: 3px; gap: 5px; }
.a-name { font-size: 8.400px; color: #aaa; white-space: nowrap; }
.a-win { margin-left: auto; display: flex; gap: 24px; padding-right: 10px; }
.a-menu { height: 16px; flex: none; display: flex; gap: 10px; align-items: center; font-size: 8.400px; color: #444; padding-left: 3px; position: relative; }
.a-menu b { margin-left: auto; margin-right: 2px; font-size: 10px; color: #666; font-weight: 700; }
.a-tools { height: 34px; flex: none; background: #f8f8f8; border-top: 1px solid #ddd; border-bottom: 1px solid #ddd; display: flex; align-items: center; padding-left: 8px; font-size: 11.500px; color: #777; position: relative; }
.at { margin-right: 16px; white-space: nowrap; }
.at.at-tools { margin-right: 19px; }
.at.doc { color: #333; font-weight: 600; position: relative; margin-right: 0; }
.at.doc::after { content: ""; position: absolute; left: 0; right: 0; bottom: -9px; height: 2px; background: #333; }
.a-icons { display: flex; gap: 13px; margin-left: 18px; align-items: center; }
.tsep { width: 1px; height: 18px; background: #e2e2e2; margin-left: 14px; flex: none; }
.pg-box { width: 25px; height: 20px; background: #fff; border: 1px solid #ccc; margin-left: 9px; font-size: 9px; color: #555; text-align: center; line-height: 18px; flex: none; }
.pg-of { font-size: 9px; color: #999; margin-left: 5px; width: 10px; white-space: nowrap; flex: none; }
.zoom-box { width: 53px; height: 20px; background: #fff; border: 1px solid #ccc; margin-left: 10px; display: flex; align-items: center; justify-content: space-between; padding: 0 6px 0 8px; font-size: 9px; color: #555; letter-spacing: -.2px; flex: none; }
.more { display: flex; gap: 2px; margin-left: 14px; }
.more i { width: 3px; height: 3px; border-radius: 50%; background: #777; }
.mobile { margin-left: 57px; flex: none; }
.signin { margin-left: 11px; font-size: 12px; color: #777; white-space: nowrap; }
.a-body { flex: 1; display: flex; min-height: 0; }
.side { width: 7px; flex: none; background: #e8e8e8; display: flex; align-items: center; justify-content: center; padding: 13px 3px 0 0; }
.side.right { background: #f2f2f2; padding: 13px 0 0 1px; }
.page { flex: 1; padding: 40px 0 0 60px; }
.page-head { width: 305px; padding-left: 260px; font: 11px/14px "Liberation Sans", sans-serif; color: #222; margin-bottom: 26px; }
.budget { border-collapse: collapse; table-layout: fixed; width: 304px; font: 11px "Liberation Sans", sans-serif; color: #222; border: 1.500px solid #222; }
.c1 { width: 106px; } .c2 { width: 66px; } .c3 { width: 65px; } .c4 { width: 67px; }
.budget td { border: 1px solid #222; border-width: 1px 1px 1px 1.500px; height: 13.670px; padding: 0 1.500px 0 2px; text-align: right; line-height: 11px; white-space: nowrap; overflow: hidden; }
.budget td:first-child, .budget td[colspan] { text-align: left; }
.budget .t-head td { height: 22px; padding-bottom: 2px; font: 700 20px/19px "Liberation Serif", serif; text-align: center; color: #111; }
.budget .tiny { font-size: 6.500px; padding: 1px 0 0 1px; line-height: 9px; }
.budget .mon td { font-weight: 700; text-align: center; }
.budget .sec { background: #a9a9a9; font-weight: 700; font-size: 11.500px; color: #111; }
.budget .in { padding-left: 11px; }
.budget .in2 { padding-left: 21px; }
.budget .in3 { padding-left: 15px; }
.budget .tot td { background: #d8d8d8; text-align: center; }
.budget .tot td:first-child { text-align: left; }
.a-vscroll { width: 11px; flex: none; display: flex; flex-direction: column; align-items: center; padding-top: 4px; }
.a-thumb { width: 10px; height: 175px; background: #d0d0d0; margin-top: 4px; }
.a-vscroll svg:last-child { margin-top: auto; margin-bottom: 4px; }
.a-status { height: 13px; flex: none; background: #eeeeee; display: flex; align-items: center; padding-left: 21px; font-size: 8.500px; color: #444; }
.dim-text { width: 72px; }
.a-hthumb { width: 360px; height: 13px; background: #cfcfcf; margin-left: 4px; }
.a-htrack { width: 90px; height: 13px; background: #f0f0f0; display: flex; align-items: center; justify-content: flex-end; padding-right: 1px; }
.a-end { flex: 1; height: 13px; background: #fff; }

/* Taskbar */
.taskbar { position: absolute; left: 0; bottom: 0; width: 1115px; height: 30px; display: flex; align-items: center; }
.apps { display: flex; height: 100%; }
.app { width: 36px; height: 100%; display: flex; align-items: center; justify-content: center; position: relative; }
.app.active { background: #47525e; }
.app.active::after, .app.under::after { content: ""; position: absolute; left: 3px; right: 3px; bottom: 0; height: 1.500px; background: #8fb8dc; }
.app.active::after { left: 0; right: 0; }
.app-letter { font: 700 7px "Liberation Sans", sans-serif; fill: #fff; text-anchor: middle; }
.tray { margin-left: auto; display: flex; align-items: center; height: 100%; width: 330px; padding-left: 4px; justify-content: flex-start; gap: 6px; }
.tray .mic { margin-right: 2px; }
.clock { display: flex; flex-direction: column; align-items: center; color: #e8ecef; font-size: 8.500px; line-height: 13px; margin-left: 3px; padding-top: 2px; white-space: nowrap; }
.notify { margin-left: 7px; }

/* Meeting tile */
.tile { position: absolute; left: 1121px; top: 284px; width: 149px; height: 149px; background: #35363f; display: flex; justify-content: center; padding-top: 20px; }
.avatar { width: 110px; height: 110px; border-radius: 50%; background: #ecd3e2; color: #5a1f45; font: 600 44px/108px "Open Sans", sans-serif; text-align: center; letter-spacing: -3px; }
.tile-name { position: absolute; left: 8px; bottom: 3px; font-size: 7.200px; color: #e8e8e8; line-height: 10px; }
```
